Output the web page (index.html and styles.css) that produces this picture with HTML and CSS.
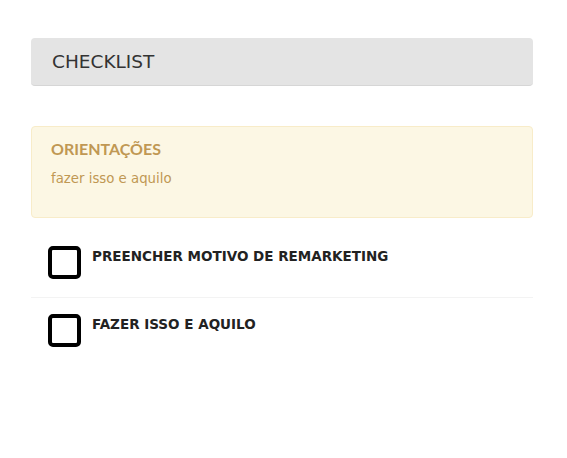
FILE: index.html
```html
<!DOCTYPE html>
<html lang="pt-BR">
<head>
  <meta charset="UTF-8">
  <title>Checklist</title>
  <link rel="stylesheet" href="styles.css">
</head>
<body>

<div class="page">

  <!--cabeçalho-->
  <div class="head">CHECKLIST</div>

  <!--orientações-->
  <div class="alert">
    <h4>ORIENTAÇÕES</h4>
    <p>fazer isso e aquilo</p>
  </div>

  <!--itens-->
  <ul class="list">
    <li>
      <span class="box"></span>
      <span class="label">PREENCHER MOTIVO DE REMARKETING</span>
    </li>
    <li>
      <span class="box"></span>
      <span class="label">FAZER ISSO E AQUILO</span>
    </li>
  </ul>

</div>

</body>
</html>
```

FILE: styles.css
```css
* {
  margin: 0;
  padding: 0;
  list-style: none;
  box-sizing: border-box;
}

body {
  background-color: #fff;
  font-family: "DejaVu Sans", Verdana, sans-serif;
}

.page {
  width: 502px;
  margin: 38px 0 0 31px;
}

.head {
  height: 48px;
  background-color: #e4e4e4;
  border-bottom: 1px solid #d6d6d6;
  border-radius: 4px;
  padding: 0 21px;
  font-size: 18.5px;
  line-height: 47px;
  color: #333;
}

.alert {
  margin-top: 40px;
  height: 92px;
  background-color: #fcf7e4;
  border: 1px solid #f8ecc9;
  border-radius: 4px;
  padding: 11px 19px;
  color: #c09853;
}

.alert h4 {
  font-family: Lato, "Open Sans", sans-serif;
  font-size: 16px;
  font-weight: bold;
  line-height: 22px;
}

.alert p {
  margin-top: 10px;
  font-size: 13.3px;
  line-height: 18px;
}

.list {
  margin-top: 12px;
}

.list li {
  display: flex;
  align-items: flex-start;
  height: 68px;
  padding: 16px 0 0 17px;
  border-bottom: 1px solid #f3f3f3;
}

.list li:last-child {
  border-bottom: none;
}

.box {
  width: 33px;
  height: 33px;
  border: 4px solid #000;
  border-radius: 5px;
  flex-shrink: 0;
}

.label {
  margin-left: 11px;
  margin-top: 2px;
  font-size: 13.5px;
  font-weight: bold;
  color: #222;
  line-height: 16px;
}
```
